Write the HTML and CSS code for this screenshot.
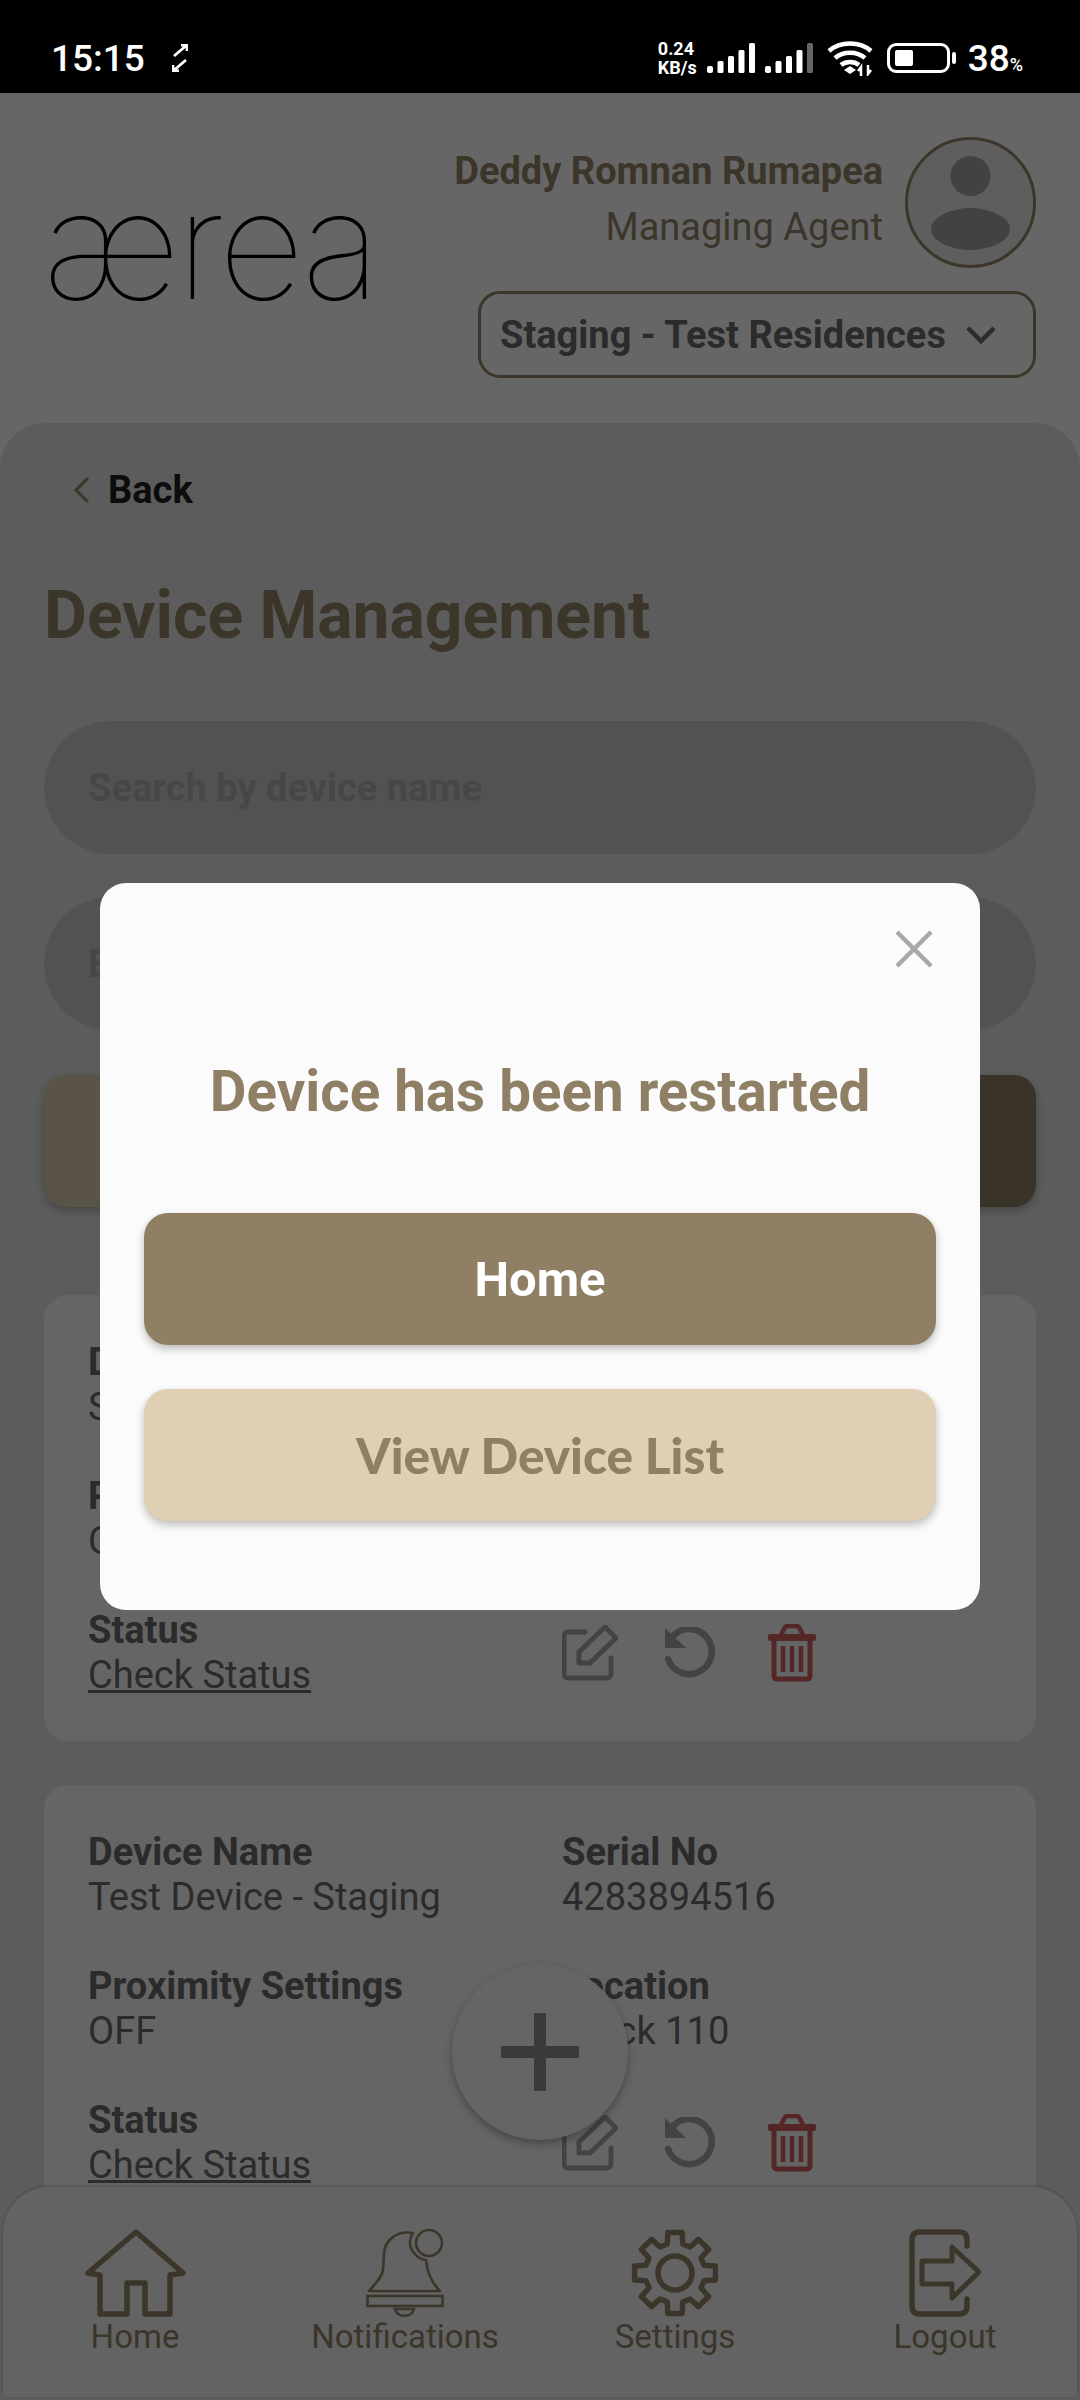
FILE: index.html
```html
<!DOCTYPE html>
<html lang="en">
<head>
    <meta charset="UTF-8">
    <meta name="viewport" content="width=device-width, initial-scale=1.0">
    <title>Aerea - Device Management</title>
    <link rel="stylesheet" href="styles.css">
</head>
<body>
<div class="status-bar">
    <div class="status-left">
        <span class="clock">15:15</span>
        <svg class="rotate-icon" width="16" height="28" viewBox="0 0 16 28">
            <path d="M9 1h6v6M15 1 2 12" fill="none" stroke="#fff" stroke-width="2.8"/>
            <path d="M7 27H1v-6M1 27l13-11" fill="none" stroke="#fff" stroke-width="2.8"/>
        </svg>
    </div>
    <div class="status-right">
        <div class="net-speed"><span>0.24</span><span>KB/s</span></div>
        <svg width="48" height="30" viewBox="0 0 48 30">
            <rect x="0" y="23" width="6" height="7" rx="2" fill="#fff"/>
            <rect x="10.5" y="18" width="6" height="12" rx="1.5" fill="#fff"/>
            <rect x="21" y="13" width="6" height="17" rx="1.5" fill="#fff"/>
            <rect x="31.5" y="7" width="6" height="23" rx="1.5" fill="#fff"/>
            <rect x="42" y="0" width="6" height="30" rx="1.5" fill="#fff"/>
        </svg>
        <svg width="48" height="30" viewBox="0 0 48 30">
            <rect x="0" y="23" width="6" height="7" rx="2" fill="#fff"/>
            <rect x="10.5" y="18" width="6" height="12" rx="1.5" fill="#fff"/>
            <rect x="21" y="13" width="6" height="17" rx="1.5" fill="#fff"/>
            <rect x="31.5" y="7" width="6" height="23" rx="1.5" fill="#fff"/>
            <rect x="42" y="0" width="6" height="30" rx="1.5" fill="#666"/>
        </svg>
        <svg class="wifi-icon" width="46" height="36" viewBox="0 0 46 36">
            <path d="M2 11C13 1 33 1 44 11" fill="none" stroke="#fff" stroke-width="4.5"/>
            <path d="M8 18C16 11 30 11 38 18" fill="none" stroke="#fff" stroke-width="4.5"/>
            <path d="M14 25C19 21 27 21 32 25" fill="none" stroke="#fff" stroke-width="4.5"/>
            <path d="M17 30l6-4 6 4-6 4z" fill="#fff"/>
            <path d="M34 36V27l-3 4M41 25v9l3-4" fill="none" stroke="#fff" stroke-width="2.5"/>
        </svg>
        <div class="battery">
            <div class="battery-body"><div class="battery-level"></div></div>
            <div class="battery-nub"></div>
        </div>
        <span class="battery-text">38<small>%</small></span>
    </div>
</div>

<div class="app">
    <header class="top-header">
        <div class="logo">ærea</div>
        <div class="account">
            <div class="user-row">
                <div class="user-text">
                    <div class="user-name">Deddy Romnan Rumapea</div>
                    <div class="user-role">Managing Agent</div>
                </div>
                <div class="avatar">
                    <svg width="125" height="125" viewBox="0 0 125 125">
                        <circle cx="62.5" cy="36" r="20" fill="#a6a6a6"/>
                        <path d="M23 89C23 76 46 68 62.5 68S102 76 102 89 80 110 62.5 110 23 102 23 89z" fill="#a6a6a6"/>
                    </svg>
                </div>
            </div>
            <div class="site-select">
                <span>Staging - Test Residences</span>
                <svg width="32" height="20" viewBox="0 0 32 20">
                    <path d="M3 3l13 13L29 3" fill="none" stroke="#6b6b6b" stroke-width="4.5"/>
                </svg>
            </div>
        </div>
    </header>

    <main class="panel">
        <a class="back-link">
            <svg width="17" height="28" viewBox="0 0 17 28">
                <path d="M15 2 3 14l12 12" fill="none" stroke="#968669" stroke-width="3"/>
            </svg>
            <span>Back</span>
        </a>
        <h1 class="page-title">Device Management</h1>

        <div class="field">Search by device name</div>
        <div class="field">Enter</div>

        <!-- labels of these two sit behind the modal -->
        <div class="btn-row">
            <div class="btn-light"></div>
            <div class="btn-dark"></div>
        </div>

        <section class="device-card">
            <div class="device-grid">
                <div class="cell"><b>D</b><span>S</span></div>
                <div class="cell"></div>
                <div class="cell"><b>P</b><span>O</span></div>
                <div class="cell"></div>
                <div class="cell"><b>Status</b><a>Check Status</a></div>
                <div class="actions">
                    <svg class="ic-edit" width="56" height="56" viewBox="0 0 56 56"><path d="M23 7H6a4 4 0 0 0-4 4v38a4 4 0 0 0 4 4h39a4 4 0 0 0 4-4V33" fill="none" stroke="#a8a8a8" stroke-width="5" stroke-linecap="round"/><path d="M17 27 43 2l11 11-26 25H17z" fill="none" stroke="#a8a8a8" stroke-width="5" stroke-linejoin="round"/></svg>
                    <svg class="ic-restart" width="52" height="52" viewBox="0 0 52 52"><path d="M10 8A22.5 22.5 0 1 1 4 32" fill="none" stroke="#a8a8a8" stroke-width="6.5" stroke-linecap="round"/><path d="M1 1v20h21z" fill="#a8a8a8"/></svg>
                    <svg class="ic-trash" width="50" height="58" viewBox="0 0 50 58"><path d="M14 11l3-6q1-3 4-3h8q3 0 4 3l3 6" fill="none" stroke="#d45f5f" stroke-width="4.5"/><rect x="1" y="10" width="48" height="7" rx="2" fill="#d45f5f"/><path d="M7 16v36q0 3 4 3h28q4 0 4-3V16" fill="none" stroke="#d45f5f" stroke-width="5"/><path d="M16 22v26M25 22v26M34 22v26" stroke="#d45f5f" stroke-width="4.5"/></svg>
                </div>
            </div>
        </section>

        <section class="device-card">
            <div class="device-grid">
                <div class="cell"><b>Device Name</b><span>Test Device - Staging</span></div>
                <div class="cell"><b>Serial No</b><span>4283894516</span></div>
                <div class="cell"><b>Proximity Settings</b><span>OFF</span></div>
                <div class="cell"><b>Location</b><span>Block 110</span></div>
                <div class="cell"><b>Status</b><a>Check Status</a></div>
                <div class="actions">
                    <svg class="ic-edit" width="56" height="56" viewBox="0 0 56 56"><path d="M23 7H6a4 4 0 0 0-4 4v38a4 4 0 0 0 4 4h39a4 4 0 0 0 4-4V33" fill="none" stroke="#a8a8a8" stroke-width="5" stroke-linecap="round"/><path d="M17 27 43 2l11 11-26 25H17z" fill="none" stroke="#a8a8a8" stroke-width="5" stroke-linejoin="round"/></svg>
                    <svg class="ic-restart" width="52" height="52" viewBox="0 0 52 52"><path d="M10 8A22.5 22.5 0 1 1 4 32" fill="none" stroke="#a8a8a8" stroke-width="6.5" stroke-linecap="round"/><path d="M1 1v20h21z" fill="#a8a8a8"/></svg>
                    <svg class="ic-trash" width="50" height="58" viewBox="0 0 50 58"><path d="M14 11l3-6q1-3 4-3h8q3 0 4 3l3 6" fill="none" stroke="#d45f5f" stroke-width="4.5"/><rect x="1" y="10" width="48" height="7" rx="2" fill="#d45f5f"/><path d="M7 16v36q0 3 4 3h28q4 0 4-3V16" fill="none" stroke="#d45f5f" stroke-width="5"/><path d="M16 22v26M25 22v26M34 22v26" stroke="#d45f5f" stroke-width="4.5"/></svg>
                </div>
            </div>
        </section>
    </main>

    <!-- Floating add button -->
    <div class="fab">
        <svg width="78" height="78" viewBox="0 0 78 78"><path d="M39 0v78M0 39h78" stroke="#919191" stroke-width="12"/></svg>
    </div>

    <!-- Bottom nav -->
    <nav class="bottom-nav">
        <div class="nav-item">
            <svg width="101" height="88" viewBox="0 0 101 88"><path d="M51 3 98 44 85 46V85H60V54H42V85H15V46L3 44z" fill="none" stroke="#968669" stroke-width="5.5" stroke-linejoin="round"/></svg>
            <span>Home</span>
        </div>
        <div class="nav-item">
            <svg width="78" height="88" viewBox="0 0 78 88">
                <circle cx="63" cy="14" r="13" fill="none" stroke="#968669" stroke-width="2.6"/>
                <path d="M47 4C30 1 19 12 18 24L17 41C16 49 8 56 3 62H74C66 54 61 42 60 31 51 30 38 18 47 4z" fill="none" stroke="#968669" stroke-width="2.6" stroke-linejoin="round"/>
                <rect x="1.5" y="67" width="75" height="10" fill="none" stroke="#968669" stroke-width="2.6"/>
                <path d="M29 80H48C46 89 31 89 29 80z" fill="none" stroke="#968669" stroke-width="2.6"/>
            </svg>
            <span>Notifications</span>
        </div>
        <div class="nav-item">
            <svg width="90" height="88" viewBox="0 0 90 88">
                <g transform="translate(45 44)" fill="none" stroke="#968669" stroke-width="5.5" stroke-linejoin="round">
                    <path d="M-7.8-29-7.1-40.4H7.1L7.8-29 15-26 23.5-33.6 33.6-23.5 26-15 29-7.8 40.4-7.1V7.1L29 7.8 26 15 33.6 23.5 23.5 33.6 15 26 7.8 29 7.1 40.4H-7.1L-7.8 29-15 26-23.5 33.6-33.6 23.5-26 15-29 7.8-40.4 7.1V-7.1L-29-7.8-26-15-33.6-23.5-23.5-33.6-15-26z"/>
                    <circle r="17"/>
                </g>
            </svg>
            <span>Settings</span>
        </div>
        <div class="nav-item">
            <svg width="72" height="88" viewBox="0 0 72 88">
                <path d="M58 17V11Q58 3 50 3H11Q3 3 3 11V77Q3 85 11 85H50Q58 85 58 77V70" fill="none" stroke="#968669" stroke-width="5.5" stroke-linecap="round"/>
                <path d="M13 32H43V18L70 43 43 69V55H13z" fill="none" stroke="#968669" stroke-width="5" stroke-linejoin="round"/>
            </svg>
            <span>Logout</span>
        </div>
    </nav>
</div>

<!-- Modal -->
<div class="modal">
    <div class="modal-content">
        <div class="modal-close">
            <svg width="38" height="38" viewBox="0 0 38 38"><path d="M2 2l34 34M36 2 2 36" stroke="#a8a8a8" stroke-width="4.5"/></svg>
        </div>
        <h2>Device has been restarted</h2>
        <button class="modal-btn primary">Home</button>
        <button class="modal-btn secondary">View Device List</button>
    </div>
</div>
</body>
</html>
```

FILE: styles.css
```css
body {
    margin: 0;
    padding: 0;
    width: 1080px;
    height: 2400px;
    overflow: hidden;
    font-family: Roboto, sans-serif;
    background-color: white;
    color: #6b6b6b;
}
/* Status bar */
.status-bar {
    position: relative;
    z-index: 5;
    height: 93px;
    box-sizing: border-box;
    padding: 23px 57px 0 51px;
    background-color: black;
    color: white;
    display: flex;
    justify-content: space-between;
    align-items: center;
}
.status-left {
    display: flex;
    align-items: center;
    gap: 27px;
}
.clock {
    font-size: 37px;
    font-weight: 500;
}
.status-right {
    display: flex;
    align-items: center;
    gap: 10px;
}
.net-speed {
    display: flex;
    flex-direction: column;
    font-size: 18px;
    font-weight: 700;
    line-height: 19px;
}
.wifi-icon {
    margin: 0 4px;
}
.battery {
    display: flex;
    align-items: center;
    gap: 2px;
}
.battery-body {
    width: 63px;
    height: 30px;
    box-sizing: border-box;
    border: 3px solid white;
    border-radius: 9px;
    padding: 4px 5px;
}
.battery-level {
    width: 18px;
    height: 100%;
    background-color: white;
    border-radius: 2px;
}
.battery-nub {
    width: 4px;
    height: 12px;
    background-color: white;
    border-radius: 2px;
}
.battery-text {
    font-size: 37px;
    font-weight: 500;
    margin-left: 2px;
}
.battery-text small {
    font-size: 18px;
}
/* Header */
.top-header {
    height: 330px;
    box-sizing: border-box;
    padding: 44px 44px 0 43px;
    display: flex;
    justify-content: space-between;
}
.logo {
    margin-top: 33px;
    font-family: Inter, sans-serif;
    font-size: 150px;
    font-weight: 100;
    line-height: 150px;
    letter-spacing: -4px;
    color: black;
}
.account {
    display: flex;
    flex-direction: column;
    align-items: flex-end;
    gap: 23px;
}
.user-row {
    display: flex;
    align-items: center;
    gap: 22px;
}
.user-text {
    padding-bottom: 8px;
    text-align: right;
    font-size: 38px;
    color: #968669;
}
.user-name {
    font-weight: 700;
    line-height: 56px;
}
.user-role {
    line-height: 56px;
}
.avatar {
    width: 131px;
    height: 131px;
    box-sizing: border-box;
    border: 3px solid #968669;
    border-radius: 50%;
    background-color: #ececec;
}
.site-select {
    width: 558px;
    height: 87px;
    box-sizing: border-box;
    padding: 0 36px 0 19px;
    border: 3px solid #968669;
    border-radius: 22px;
    display: flex;
    align-items: center;
    justify-content: space-between;
    font-size: 38px;
    font-weight: 700;
    color: #6b6b6b;
}
/* Main panel */
.panel {
    height: 1977px;
    box-sizing: border-box;
    padding: 0 44px;
    background-color: #e6e6e6;
    border-radius: 45px 45px 0 0;
    overflow: hidden;
}
.back-link {
    display: flex;
    align-items: center;
    gap: 18px;
    padding: 44px 0 0 29px;
    font-size: 38px;
    font-weight: 700;
    line-height: 46px;
    color: #202020;
}
.page-title {
    margin: 68px 0 0;
    font-size: 66px;
    font-weight: 700;
    line-height: 70px;
    color: #968669;
}
.field {
    height: 133px;
    box-sizing: border-box;
    padding-left: 44px;
    margin-top: 43px;
    border-radius: 67px;
    background-color: #cdcdcd;
    display: flex;
    align-items: center;
    font-size: 38px;
    font-weight: 700;
    color: #b2b2b2;
}
.page-title + .field {
    margin-top: 70px;
}
.btn-row {
    display: flex;
    gap: 20px;
    margin-top: 45px;
}
.btn-light, .btn-dark {
    flex: 1;
    height: 132px;
    border-radius: 22px;
    box-shadow: 0 4px 8px rgba(0, 0, 0, 0.25);
}
.btn-light {
    background-color: #e0cfb4;
}
.btn-dark {
    background-color: #8f7f65;
}
.device-card {
    height: 446px;
    box-sizing: border-box;
    margin-top: 44px;
    padding: 45px 44px 0;
    background-color: #fcfcfc;
    border-radius: 24px;
}
.btn-row + .device-card {
    margin-top: 88px;
}
.device-grid {
    display: grid;
    grid-template-columns: 474px 1fr;
    row-gap: 44px;
}
.cell {
    display: flex;
    flex-direction: column;
    font-size: 38px;
    line-height: 45px;
}
.cell b {
    font-weight: 700;
}
.cell a {
    text-decoration: underline;
}
.actions {
    display: flex;
    align-items: center;
    gap: 46px;
}
.ic-trash {
    margin-left: 5px;
}
/* Floating add button */
.fab {
    position: absolute;
    left: 452px;
    top: 1964px;
    width: 176px;
    height: 176px;
    border-radius: 50%;
    background-color: #fcfcfc;
    box-shadow: 0 4px 8px rgba(0, 0, 0, 0.3);
    display: flex;
    align-items: center;
    justify-content: center;
}
/* Bottom nav */
.bottom-nav {
    position: absolute;
    left: 3px;
    right: 3px;
    bottom: 3px;
    height: 210px;
    box-sizing: border-box;
    padding-top: 42px;
    background-color: #f8f8f8;
    border-radius: 45px 45px 0 0;
    box-shadow: 0 -1px 3px rgba(0, 0, 0, 0.2);
    display: grid;
    grid-template-columns: repeat(4, 270px);
    justify-content: center;
}
.nav-item {
    display: flex;
    flex-direction: column;
    align-items: center;
    font-size: 33px;
    line-height: 40px;
    color: #968669;
}
/* Modal */
.modal {
    position: fixed;
    z-index: 4;
    left: 0;
    top: 93px;
    width: 100%;
    height: 2307px;
    background-color: rgba(0, 0, 0, 0.6);
    display: flex;
    align-items: center;
    justify-content: center;
}
.modal-content {
    position: relative;
    width: 880px;
    height: 727px;
    box-sizing: border-box;
    padding: 0 44px;
    background-color: #fbfbfb;
    border-radius: 26px;
    display: flex;
    flex-direction: column;
}
.modal-close {
    position: absolute;
    top: 47px;
    right: 47px;
    height: 38px;
}
.modal h2 {
    margin: 174px 0 0;
    font-size: 56.5px;
    font-weight: 700;
    line-height: 70px;
    text-align: center;
    color: #8f7f65;
}
.modal-btn {
    height: 132px;
    border: none;
    border-radius: 24px;
    font-size: 49px;
    font-weight: 700;
    box-shadow: 0 4px 8px rgba(0, 0, 0, 0.25);
}
.primary {
    margin-top: 86px;
    background-color: #8f7f65;
    color: white;
    font-family: Roboto, sans-serif;
}
.secondary {
    margin-top: 44px;
    background-color: #dfcfb4;
    color: #8f7f65;
    font-family: Lato, sans-serif;
    font-size: 49.5px;
    font-weight: 900;
}
```
